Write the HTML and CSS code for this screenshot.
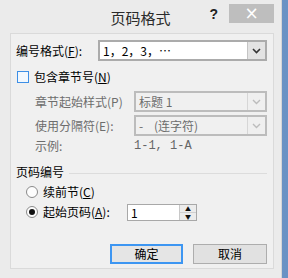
FILE: index.html
```html
<!DOCTYPE html>
<html lang="zh">
<head>
    <meta charset="UTF-8">
    <title>页码格式</title>
    <link rel="stylesheet" href="styles.css">
</head>
<body>
    <div class="window">
        <div class="titlebar">
            <div></div>
            <div class="title">页码格式</div>
            <div class="title-tools">
                <span class="help">?</span>
                <span class="close">×</span>
            </div>
        </div>
        <div class="client">
            <div class="row first">
                <span class="label-main">编号格式(<u>F</u>):</span>
                <div class="select wide">
                    <span class="value">1，2，3，…</span>
                    <span class="arrow"><svg width="9" height="6" viewBox="0 0 9 6"><path d="M1 1 L4.5 4.5 L8 1" fill="none" stroke="#333" stroke-width="1.6"/></svg></span>
                </div>
            </div>
            <div class="row check-row">
                <span class="checkbox"></span>
                <span>包含章节号(<u>N</u>)</span>
            </div>
            <div class="row sub sel-row">
                <span class="label-sub">章节起始样式(P)</span>
                <div class="select off">
                    <span class="value">标题 1</span>
                    <span class="arrow"><svg width="9" height="6" viewBox="0 0 9 6"><path d="M1 1 L4.5 4.5 L8 1" fill="none" stroke="#bcbcbc" stroke-width="1.4"/></svg></span>
                </div>
            </div>
            <div class="row sub sel-row second">
                <span class="label-sub">使用分隔符(E):</span>
                <div class="select off">
                    <span class="value">-&nbsp;&nbsp;&nbsp;&nbsp;(连字符)</span>
                    <span class="arrow"><svg width="9" height="6" viewBox="0 0 9 6"><path d="M1 1 L4.5 4.5 L8 1" fill="none" stroke="#bcbcbc" stroke-width="1.4"/></svg></span>
                </div>
            </div>
            <div class="row sub example">
                <span class="label-sub">示例:</span>
                <span class="sample">1-1, 1-A</span>
            </div>
            <div class="row group">
                <span>页码编号</span>
                <span class="rule"></span>
            </div>
            <div class="row radio-row">
                <span class="radio"></span>
                <span>续前节(<u>C</u>)</span>
            </div>
            <div class="row radio-row start">
                <span class="radio checked"></span>
                <span class="start-label">起始页码(<u>A</u>):</span>
                <div class="spin">
                    <span class="spin-value">1</span>
                    <span class="spin-btns">
                        <span class="spin-btn">▲</span>
                        <span class="spin-btn">▼</span>
                    </span>
                </div>
            </div>
            <div class="buttons">
                <span class="btn default">确定</span>
                <span class="btn">取消</span>
            </div>
        </div>
    </div>
</body>
</html>
```

FILE: styles.css
```css
body {
    margin: 0;
    background: linear-gradient(90deg, #7aa0cf, #6a92c4);
    font-family: "Noto Sans CJK SC", "Microsoft YaHei", sans-serif;
    font-size: 12px;
    color: #000;
}
u { text-decoration: underline; text-underline-offset: 1px; }
.window {
    width: 281px;
    height: 278px;
    background: #ebebeb;
    border-right: 1px solid #d6d6d6;
    display: flex;
    flex-direction: column;
}
.titlebar {
    height: 33px;
    display: grid;
    grid-template-columns: 1fr auto 1fr;
}
.title {
    font-size: 15px;
    line-height: 15px;
    padding-top: 10px;
    color: #2a2a2a;
}
.title-tools {
    display: flex;
    justify-content: flex-end;
    align-items: flex-start;
    padding-right: 7px;
}
.help {
    font-family: "Liberation Sans", sans-serif;
    font-weight: bold;
    font-size: 14px;
    line-height: 14px;
    margin-top: 7px;
    margin-right: 11px;
    color: #222;
}
.close {
    width: 45px;
    height: 19px;
    margin-top: 4px;
    background: #bebebe;
    color: #fff;
    font-family: "DejaVu Sans", sans-serif;
    font-size: 17px;
    line-height: 19px;
    text-align: center;
}
.client {
    margin: 0 7px 9px 10px;
    flex: 1;
    border: 1px solid #dadada;
    background: #f0f0f0;
    padding: 0 6px 0 5px;
    display: flex;
    flex-direction: column;
}
.row {
    display: flex;
    align-items: center;
    line-height: 14px;
}
.first { margin-top: 6px; height: 21px; }
.label-main { width: 82px; }
.select {
    flex: 1;
    height: 21px;
    box-sizing: border-box;
    border: 2px solid #ababab;
    background: #fff;
    display: flex;
    align-items: center;
}
.select .value {
    flex: 1;
    padding-left: 3px;
    font-family: "Noto Sans CJK SC", sans-serif;
}
.select .arrow {
    width: 17px;
    height: 100%;
    border-left: 1px solid #c4c4c4;
    background: #e3e3e3;
    display: flex;
    align-items: center;
    justify-content: center;
}
.check-row { margin-top: 7px; height: 18px; }
.checkbox {
    width: 10px;
    height: 10px;
    margin-left: 1px;
    margin-right: 5px;
    border: 1px solid #3d8fe6;
    background: #f2f8fe;
}
.sub { padding-left: 19px; color: #6d6d6d; }
.label-sub { width: 99px; }
.sel-row { margin-top: 5px; height: 21px; }
.sel-row.second { margin-top: 3px; }
.select.off { border-color: #bcbcbc; background: #f0f0f0; }
.select.off .value { color: #6d6d6d; }
.select.off .arrow { background: #efefef; border-left-color: #d6d6d6; }
.example { height: 18px; margin-top: 1px; }
.sample { font-family: "Liberation Mono", monospace; font-size: 12px; color: #666; }
.group { margin-top: 8px; height: 18px; }
.rule {
    flex: 1;
    height: 1px;
    background: #dcdcdc;
    margin-left: 5px;
    margin-top: 2px;
}
.radio-row { height: 18px; padding-left: 10px; margin-top: 2px; }
.radio {
    width: 12px;
    height: 12px;
    box-sizing: border-box;
    border: 1px solid #8a8a8a;
    border-radius: 50%;
    background: #fdfdfd;
    margin-right: 5px;
    display: flex;
    align-items: center;
    justify-content: center;
}
.radio.checked::after {
    content: "";
    width: 6px;
    height: 6px;
    border-radius: 50%;
    background: #111;
}
.start { margin-top: 2px; height: 18px; }
.start-label { width: 84px; }
.spin {
    width: 70px;
    height: 17px;
    box-sizing: border-box;
    border: 1px solid #a8a8a8;
    background: #fff;
    display: flex;
}
.spin-value { flex: 1; padding-left: 3px; line-height: 15px; }
.spin-btns {
    width: 16px;
    display: flex;
    flex-direction: column;
    border-left: 1px solid #c8c8c8;
}
.spin-btn {
    flex: 1;
    background: #ececec;
    font-size: 6px;
    line-height: 7px;
    text-align: center;
    color: #111;
    border-bottom: 1px solid #d0d0d0;
}
.spin-btn:last-child { border-bottom: none; }
.buttons {
    margin-top: 23px;
    display: flex;
    justify-content: flex-end;
    gap: 10px;
}
.btn {
    width: 74px;
    height: 20px;
    box-sizing: border-box;
    border: 1px solid #adadad;
    background: #e1e1e1;
    text-align: center;
    line-height: 18px;
}
.btn.default {
    width: 73px;
    border: 2px solid #3d96f2;
    background: #e5e5e5;
    line-height: 16px;
}
```
